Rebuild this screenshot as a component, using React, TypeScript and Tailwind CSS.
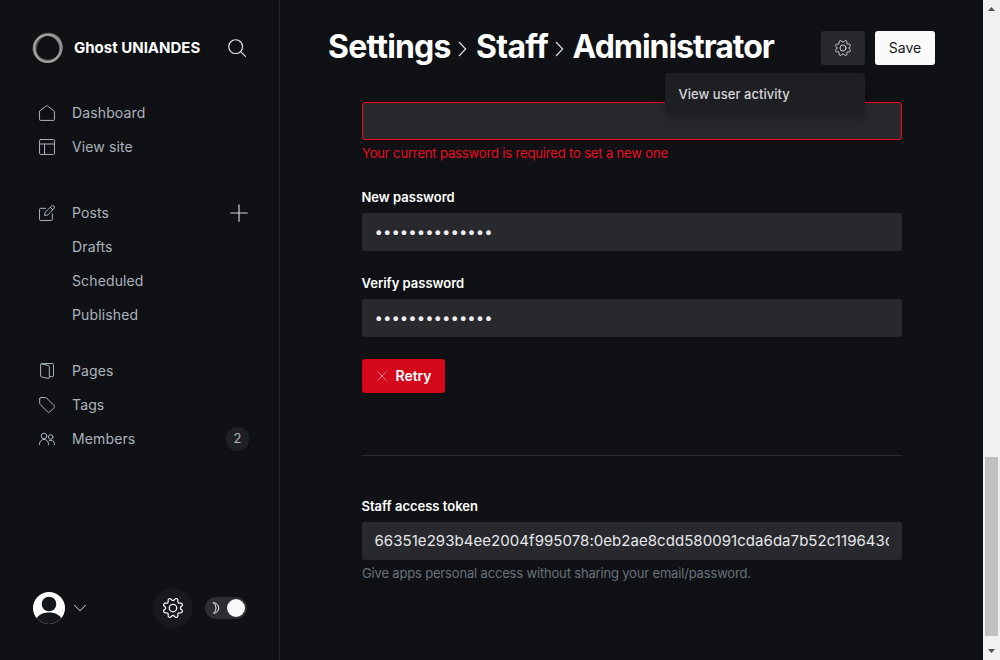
import type { ReactNode } from 'react';

const COG =
  'M10.546 2.438a1.957 1.957 0 002.908 0L14.4 1.4a1.959 1.959 0 013.41 1.413l-.071 1.4A1.958 1.958 0 0019.8 6.267l1.4-.071a1.959 1.959 0 011.413 3.41l-1.042.94a1.96 1.96 0 000 2.909l1.042.94a1.959 1.959 0 01-1.413 3.41l-1.4-.071a1.958 1.958 0 00-2.056 2.056l.071 1.4A1.959 1.959 0 0114.4 22.6l-.941-1.041a1.959 1.959 0 00-2.908 0L9.606 22.6A1.959 1.959 0 016.2 21.192l.072-1.4a1.958 1.958 0 00-2.056-2.056l-1.4.071A1.958 1.958 0 011.4 14.4l1.041-.94a1.96 1.96 0 000-2.909L1.4 9.606A1.958 1.958 0 012.809 6.2l1.4.071a1.958 1.958 0 002.058-2.06L6.2 2.81A1.959 1.959 0 019.606 1.4z';

function Icon({ className, width = 1.5, children }: { className: string; width?: number; children: ReactNode }) {
  return (
    <svg viewBox="0 0 24 24" className={className} fill="none" stroke="currentColor" strokeWidth={width} strokeLinecap="round" strokeLinejoin="round">
      {children}
    </svg>
  );
}

function Cog({ className, width }: { className: string; width?: number }) {
  return (
    <Icon className={className} width={width}>
      <path d={COG} />
      <circle cx="12" cy="12" r="4.5" />
    </Icon>
  );
}

function NavItem({ label, icon, children }: { label: string; icon?: ReactNode; children?: ReactNode }) {
  return (
    <li className="flex h-[34px] items-center pl-[39px] pr-[31px]">
      <span className="flex w-[33px] shrink-0 items-center text-[#abb4be]">
        {icon && <Icon className="size-4">{icon}</Icon>}
      </span>
      <span className="flex-1 pb-px text-[14px] leading-5 tracking-[0.13px] text-[#abb4be]">{label}</span>
      {children}
    </li>
  );
}

function Sidebar() {
  return (
    <aside className="flex w-[280px] shrink-0 flex-col border-r border-[#26282c]">
      <div className="flex h-24 items-center pl-8 pr-[33px]">
        <svg viewBox="0 0 32 32" className="size-8 shrink-0" fill="none">
          <ellipse cx="15.5" cy="16.3" rx="14" ry="13.8" stroke="#aaa" strokeOpacity=".7" strokeWidth="1.8" />
          <ellipse cx="16.6" cy="15.4" rx="13.6" ry="13.4" stroke="#999" strokeOpacity=".6" strokeWidth="2" transform="rotate(-30 16 16)" />
          <ellipse cx="15.3" cy="16.5" rx="12.8" ry="13.2" stroke="#ddd" strokeOpacity=".5" strokeWidth="1.6" />
          <ellipse cx="17" cy="16" rx="12.6" ry="14.2" stroke="#999" strokeOpacity=".5" strokeWidth="1.4" transform="rotate(25 16 16)" />
        </svg>
        <span className="ml-[10px] flex-1 whitespace-nowrap text-[15px] font-bold text-white">Ghost UNIANDES</span>
        <Icon className="size-[18px] text-[#e5e9ed]">
          <circle cx="10.2" cy="10.2" r="9.2" />
          <path d="M16.8 16.8L23.3 23.3" />
        </Icon>
      </div>
      <nav className="flex flex-1 flex-col">
        <ul>
          <NavItem label="Dashboard" icon={<path d="M.8 9.6v12a1.5 1.5 0 001.5 1.5h19.4a1.5 1.5 0 001.5-1.5V9.6L12.6 1.2a1 1 0 00-1.2 0z" />} />
          <NavItem label="View site" icon={<><rect x=".8" y=".8" width="22.4" height="22.4" rx="1.5" /><path d="M.8 7.5h22.4M8.3 7.5v15.7" /></>} />
        </ul>
        <ul className="mt-8">
          <NavItem
            label="Posts"
            icon={<><path d="M20 13.5v8.2a1.5 1.5 0 01-1.5 1.5H2.3a1.5 1.5 0 01-1.5-1.5V6.5A1.5 1.5 0 012.3 5H10" /><path d="M12.8 15l-4.5.8.7-4.5 9.8-9.7a2.5 2.5 0 013.6 3.6zM17 3.5L20.5 7" /></>}
          >
            <Icon className="size-[18px] text-[#d0d4d8]" width={1.6}>
              <path d="M12 1v22M1 12h22" />
            </Icon>
          </NavItem>
          <NavItem label="Drafts" />
          <NavItem label="Scheduled" />
          <NavItem label="Published" />
        </ul>
        <ul className="mt-[22px]">
          <NavItem label="Pages" icon={<><path d="M3.5 1.3l10.8 2.5a1.5 1.5 0 011.2 1.5v16.3a1.5 1.5 0 01-1.9 1.5l-10-2.3a1.5 1.5 0 01-1.2-1.5V2.3A1.5 1.5 0 013.9.8h16.3a1.5 1.5 0 011.5 1.5v16.7a1.5 1.5 0 01-1.5 1.5h-4.5" /></>} />
          <NavItem label="Tags" icon={<path d="M1 2.5v6.7a3 3 0 00.9 2.1l11.3 11.3a2 2 0 002.8 0l6.8-6.8a2 2 0 000-2.8L11.5 1.7A3 3 0 009.4.8H2.7A1.7 1.7 0 001 2.5z" />} />
          <NavItem label="Members" icon={<><circle cx="7.5" cy="7.5" r="4.2" /><path d="M.8 20.5v-1.2a6.7 6.7 0 0113.4 0v1.2" /><circle cx="17.5" cy="9" r="3.4" /><path d="M15.5 14.3a5.4 5.4 0 017.7 4.9v1.3" /></>}>
            <span className="-mr-[1px] flex h-6 w-[23px] items-center justify-center rounded-full bg-[#1e2023] text-[13px] text-[#abb4be]">2</span>
          </NavItem>
        </ul>
      </nav>
      <div className="flex h-[104px] items-center pl-[33px]">
        <svg viewBox="0 0 32 32" className="size-8">
          <defs>
            <clipPath id="avatar"><circle cx="16" cy="16" r="16" /></clipPath>
          </defs>
          <g clipPath="url(#avatar)">
            <rect width="32" height="32" fill="#fff" />
            <circle cx="16" cy="12" r="7.3" fill="#15171a" />
            <path d="M3 27C6 22.5 10 20.5 16 20.5S26 22.5 29 27v5H3z" fill="#15171a" />
            <path d="M0 26.5h5V32H0zM27 26.5h5V32h-5z" fill="#15171a" />
          </g>
        </svg>
        <Icon className="ml-[9px] size-3 text-[#dfe3e7]" width={2}>
          <path d="M1 6.5l11 11 11-11" />
        </Icon>
        <span className="ml-[67px] flex size-10 items-center justify-center rounded-full bg-[#17191c] text-[#f2f4f6]">
          <Cog className="size-5" />
        </span>
        <span className="ml-3 flex h-[22px] w-[42px] items-center justify-between rounded-full bg-[#2b2d31] pl-[7px] pr-[2px] text-white">
          <Icon className="size-3" width={1.8}>
            <path d="M3 1.5a10.5 10.5 0 110 21 11.5 11.5 0 005-10.5A11.5 11.5 0 003 1.5z" />
          </Icon>
          <span className="size-[18px] rounded-full bg-[#fafafa]" />
        </span>
      </div>
    </aside>
  );
}

function Chevron() {
  return (
    <svg viewBox="0 0 9 16" className="mt-1 h-4 w-[9px] shrink-0" fill="none" stroke="#e6e8ea" strokeWidth="1.1">
      <path d="M1 1l6.7 7L1 15" />
    </svg>
  );
}

function Label({ children }: { children: ReactNode }) {
  return <div className="-ml-[0.5px] h-5 text-[13px] leading-5 font-semibold text-white">{children}</div>;
}

function PasswordField({ label }: { label: string }) {
  return (
    <input
      type="password"
      aria-label={label}
      defaultValue="aaaaaaaaaaaaaa"
      className="block h-[38px] w-full rounded-[3px] bg-[#28292d] px-[12.5px] pb-[2px] text-[15px] text-[#eceef0] outline-none"
    />
  );
}

function Content() {
  return (
    <main className="flex min-w-0 flex-1 flex-col">
      <header className="flex h-[96px] shrink-0 items-center px-[48px]">
        <h1 className="-mt-[3px] flex flex-1 items-center whitespace-nowrap text-[32px] font-bold tracking-[-0.8px] text-white">
          <span className="w-[130px]">Settings</span>
          <Chevron />
          <span className="ml-[9px] w-[79px] tracking-[-0.7px]">Staff</span>
          <Chevron />
          <span className="ml-[8.5px] tracking-[-1.03px]">Administrator</span>
        </h1>
        <div className="relative mr-[10px]">
          <div className="flex h-[34px] w-11 items-center justify-center rounded-[3px] bg-[#28292d] text-[#ced3d8]">
            <Cog className="size-4" />
          </div>
          <div className="absolute top-[42px] right-0 flex h-[42px] w-[200px] items-center rounded-[3px] bg-[#1e1f23] pt-[2px] pl-[13.5px] text-[13px] font-medium tracking-[0.04px] text-[#d5d7da] shadow-[0_6px_14px_rgba(0,0,0,0.2)]">
            View user activity
          </div>
        </div>
        <div className="flex h-[34px] w-[60px] items-center justify-center rounded-[3px] bg-[#fafafa] pb-[2px] text-[14px] text-[#15171a]">Save</div>
      </header>
      <section className="ml-[82px] w-[540px] pt-[6px]">
        <div className="h-[38px] rounded-[3px] border border-[#f50b23] bg-[#28292d]" />
        <p className="mt-[3px] text-[13px] leading-5 tracking-[-0.15px] text-[#e90c22]">Your current password is required to set a new one</p>
        <div className="mt-6"><Label>New password</Label></div>
        <div className="mt-[6px]"><PasswordField label="New password" /></div>
        <div className="mt-[22px]"><Label>Verify password</Label></div>
        <div className="mt-[6px]"><PasswordField label="Verify password" /></div>
        <div className="mt-[22px] flex h-[34px] w-[83px] items-center rounded-[3px] bg-[#d4071b] pl-[15px] text-[14px] font-semibold text-white">
          <Icon className="mr-[8.5px] size-[10px] text-[#f29ca5]" width={2}>
            <path d="M1.5 1.5l21 21M22.5 1.5l-21 21" />
          </Icon>
          <span className="pb-[2px] tracking-[-0.05px]">Retry</span>
        </div>
        <div className="mt-[62px] border-t border-[#2b2d31]" />
        <div className="mt-10"><Label>Staff access token</Label></div>
        <div className="mt-[6px] h-[38px] rounded-[3px] bg-[#28292d] pr-[13px] pl-[12.5px]">
          <div className="overflow-hidden whitespace-nowrap text-[15px] leading-[38px] tracking-[0.05px] text-[#e6e8eb]">66351e293b4ee2004f995078:0eb2ae8cdd580091cda6da7b52c119643c</div>
        </div>
        <p className="mt-[3px] text-[13px] leading-5 tracking-[-0.17px] text-[#66717d]">Give apps personal access without sharing your email/password.</p>
      </section>
    </main>
  );
}

function Scrollbar() {
  return (
    <div className="flex w-[17px] shrink-0 flex-col items-center bg-[#f1f1f1]">
      <svg viewBox="0 0 17 17" className="size-[17px]"><path d="M5 11h7L8.5 7z" fill="#505050" /></svg>
      <div className="mt-[440px] h-[179px] w-[13px] bg-[#c1c1c1]" />
      <svg viewBox="0 0 17 17" className="mt-[7px] size-[17px]"><path d="M5 6h7l-3.5 4z" fill="#505050" /></svg>
    </div>
  );
}

export default function App() {
  return (
    <div className="flex h-[660px] w-[1000px] overflow-hidden bg-[#101114] font-['Inter',sans-serif]">
      <Sidebar />
      <Content />
      <Scrollbar />
    </div>
  );
}
